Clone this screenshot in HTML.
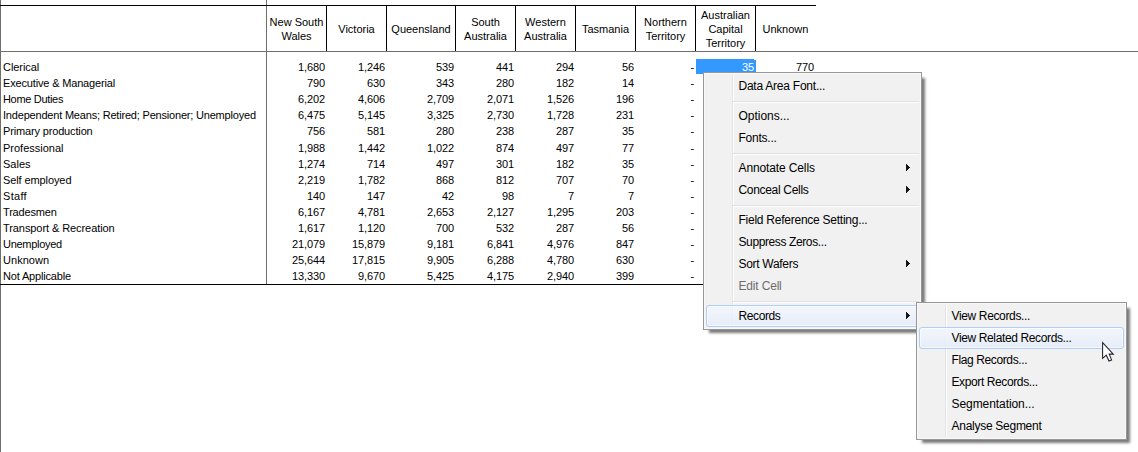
<!DOCTYPE html>
<html><head><meta charset="utf-8"><title>Table</title>
<style>
html,body{margin:0;padding:0;background:#fff;}
body{width:1138px;height:452px;position:relative;overflow:hidden;font-family:"Liberation Sans",Arial,sans-serif;font-size:11px;color:#000;}
.a{position:absolute;}
.ln{position:absolute;background:#000;}
.g{background:#6e6e6e;}
.t{position:absolute;white-space:nowrap;line-height:14px;height:14px;}
.n{text-align:right;letter-spacing:-0.1px;}
.h{position:absolute;text-align:center;line-height:14px;white-space:nowrap;}
.menu{position:absolute;background:#f1f1f1;border:1px solid #979797;box-sizing:border-box;box-shadow:4.5px 4.5px 2.5px -1.5px rgba(0,0,0,.52);font-size:12px;}
.menu:before{content:"";position:absolute;left:0;top:0;right:0;bottom:0;border:1px solid #f8f8f8;}
.gut{position:absolute;left:28px;top:2px;bottom:2px;width:1px;background:#e2e3e3;border-right:1px solid #fff;}
.mi{position:absolute;left:34.5px;white-space:nowrap;line-height:22px;height:22px;color:#000;}
.sep{position:absolute;left:29px;right:2px;height:1px;background:#e0e0e0;border-bottom:1px solid #fff;}
.hov{position:absolute;left:2px;right:2px;height:22px;box-sizing:border-box;border:1px solid #aecff7;border-radius:3px;background:linear-gradient(rgba(244,247,254,.8),rgba(227,236,250,.8));box-shadow:inset 0 0 0 1px rgba(255,255,255,.6);}
.arr{position:absolute;width:0;height:0;border-left:4px solid #000;border-top:3.5px solid transparent;border-bottom:3.5px solid transparent;}
</style></head><body>

<div class="ln g" style="left:0;top:0;width:1px;height:452px"></div>
<div class="ln g" style="left:266px;top:0;width:1px;height:285px"></div>
<div class="ln" style="left:0;top:5px;width:816px;height:1px"></div>
<div class="ln g" style="left:0;top:51px;width:1138px;height:1px"></div>
<div class="ln" style="left:0;top:284px;width:816px;height:1px"></div>
<div class="ln" style="left:326px;top:6px;width:1px;height:45px"></div>
<div class="ln" style="left:386px;top:6px;width:1px;height:45px"></div>
<div class="ln" style="left:455px;top:6px;width:1px;height:45px"></div>
<div class="ln" style="left:515px;top:6px;width:1px;height:45px"></div>
<div class="ln" style="left:575px;top:6px;width:1px;height:45px"></div>
<div class="ln" style="left:635px;top:6px;width:1px;height:45px"></div>
<div class="ln" style="left:695px;top:6px;width:1px;height:45px"></div>
<div class="ln" style="left:755px;top:6px;width:1px;height:45px"></div>
<div class="h" style="left:267px;width:59px;top:15.0px"><span id="h0_0" style="">New South</span><br><span id="h0_1" style="">Wales</span></div>
<div class="h" style="left:327px;width:59px;top:22.0px"><span id="h1_0" style="">Victoria</span></div>
<div class="h" style="left:387px;width:68px;top:22.0px"><span id="h2_0" style="">Queensland</span></div>
<div class="h" style="left:456px;width:59px;top:15.0px"><span id="h3_0" style="">South</span><br><span id="h3_1" style="">Australia</span></div>
<div class="h" style="left:516px;width:59px;top:15.0px"><span id="h4_0" style="">Western</span><br><span id="h4_1" style="">Australia</span></div>
<div class="h" style="left:576px;width:59px;top:22.0px"><span id="h5_0" style="">Tasmania</span></div>
<div class="h" style="left:636px;width:59px;top:15.0px"><span id="h6_0" style="">Northern</span><br><span id="h6_1" style="">Territory</span></div>
<div class="h" style="left:696px;width:59px;top:8.0px"><span id="h7_0" style="">Australian</span><br><span id="h7_1" style="">Capital</span><br><span id="h7_2" style="">Territory</span></div>
<div class="h" style="left:756px;width:59px;top:22.0px"><span id="h8_0" style="">Unknown</span></div>
<div class="a" style="left:696px;top:59px;width:60px;height:15px;background:#3399ff"></div>
<div class="a" style="left:754px;top:59px;width:2px;height:1px;background:#fff"></div>
<div class="t" id="r0" style="left:3px;top:60px;letter-spacing:-0.057px;">Clerical</div>
<div class="t n" style="right:813px;top:60px;">1,680</div>
<div class="t n" style="right:753px;top:60px;">1,246</div>
<div class="t n" style="right:684px;top:60px;">539</div>
<div class="t n" style="right:624px;top:60px;">441</div>
<div class="t n" style="right:564px;top:60px;">294</div>
<div class="t n" style="right:504px;top:60px;">56</div>
<div class="t n" style="right:444px;top:60px;">-</div>
<div class="t n" style="right:384px;top:60px;color:#fff;">35</div>
<div class="t n" style="right:324px;top:60px;">770</div>
<div class="t" id="r1" style="left:3px;top:76px;letter-spacing:-0.162px;">Executive &amp; Managerial</div>
<div class="t n" style="right:813px;top:76px;">790</div>
<div class="t n" style="right:753px;top:76px;">630</div>
<div class="t n" style="right:684px;top:76px;">343</div>
<div class="t n" style="right:624px;top:76px;">280</div>
<div class="t n" style="right:564px;top:76px;">182</div>
<div class="t n" style="right:504px;top:76px;">14</div>
<div class="t n" style="right:444px;top:76px;">-</div>
<div class="t" id="r2" style="left:3px;top:92px;letter-spacing:-0.320px;">Home Duties</div>
<div class="t n" style="right:813px;top:92px;">6,202</div>
<div class="t n" style="right:753px;top:92px;">4,606</div>
<div class="t n" style="right:684px;top:92px;">2,709</div>
<div class="t n" style="right:624px;top:92px;">2,071</div>
<div class="t n" style="right:564px;top:92px;">1,526</div>
<div class="t n" style="right:504px;top:92px;">196</div>
<div class="t n" style="right:444px;top:92px;">-</div>
<div class="t" id="r3" style="left:3px;top:108px;letter-spacing:-0.194px;">Independent Means; Retired; Pensioner; Unemployed</div>
<div class="t n" style="right:813px;top:108px;">6,475</div>
<div class="t n" style="right:753px;top:108px;">5,145</div>
<div class="t n" style="right:684px;top:108px;">3,325</div>
<div class="t n" style="right:624px;top:108px;">2,730</div>
<div class="t n" style="right:564px;top:108px;">1,728</div>
<div class="t n" style="right:504px;top:108px;">231</div>
<div class="t n" style="right:444px;top:108px;">-</div>
<div class="t" id="r4" style="left:3px;top:124px;letter-spacing:-0.153px;">Primary production</div>
<div class="t n" style="right:813px;top:124px;">756</div>
<div class="t n" style="right:753px;top:124px;">581</div>
<div class="t n" style="right:684px;top:124px;">280</div>
<div class="t n" style="right:624px;top:124px;">238</div>
<div class="t n" style="right:564px;top:124px;">287</div>
<div class="t n" style="right:504px;top:124px;">35</div>
<div class="t n" style="right:444px;top:124px;">-</div>
<div class="t" id="r5" style="left:3px;top:141px;letter-spacing:0.000px;">Professional</div>
<div class="t n" style="right:813px;top:141px;">1,988</div>
<div class="t n" style="right:753px;top:141px;">1,442</div>
<div class="t n" style="right:684px;top:141px;">1,022</div>
<div class="t n" style="right:624px;top:141px;">874</div>
<div class="t n" style="right:564px;top:141px;">497</div>
<div class="t n" style="right:504px;top:141px;">77</div>
<div class="t n" style="right:444px;top:141px;">-</div>
<div class="t" id="r6" style="left:3px;top:157px;letter-spacing:0.000px;">Sales</div>
<div class="t n" style="right:813px;top:157px;">1,274</div>
<div class="t n" style="right:753px;top:157px;">714</div>
<div class="t n" style="right:684px;top:157px;">497</div>
<div class="t n" style="right:624px;top:157px;">301</div>
<div class="t n" style="right:564px;top:157px;">182</div>
<div class="t n" style="right:504px;top:157px;">35</div>
<div class="t n" style="right:444px;top:157px;">-</div>
<div class="t" id="r7" style="left:3px;top:173px;letter-spacing:-0.100px;">Self employed</div>
<div class="t n" style="right:813px;top:173px;">2,219</div>
<div class="t n" style="right:753px;top:173px;">1,782</div>
<div class="t n" style="right:684px;top:173px;">868</div>
<div class="t n" style="right:624px;top:173px;">812</div>
<div class="t n" style="right:564px;top:173px;">707</div>
<div class="t n" style="right:504px;top:173px;">70</div>
<div class="t n" style="right:444px;top:173px;">-</div>
<div class="t" id="r8" style="left:3px;top:189px;letter-spacing:0.300px;">Staff</div>
<div class="t n" style="right:813px;top:189px;">140</div>
<div class="t n" style="right:753px;top:189px;">147</div>
<div class="t n" style="right:684px;top:189px;">42</div>
<div class="t n" style="right:624px;top:189px;">98</div>
<div class="t n" style="right:564px;top:189px;">7</div>
<div class="t n" style="right:504px;top:189px;">7</div>
<div class="t n" style="right:444px;top:189px;">-</div>
<div class="t" id="r9" style="left:3px;top:205px;letter-spacing:-0.175px;">Tradesmen</div>
<div class="t n" style="right:813px;top:205px;">6,167</div>
<div class="t n" style="right:753px;top:205px;">4,781</div>
<div class="t n" style="right:684px;top:205px;">2,653</div>
<div class="t n" style="right:624px;top:205px;">2,127</div>
<div class="t n" style="right:564px;top:205px;">1,295</div>
<div class="t n" style="right:504px;top:205px;">203</div>
<div class="t n" style="right:444px;top:205px;">-</div>
<div class="t" id="r10" style="left:3px;top:221px;letter-spacing:-0.076px;">Transport &amp; Recreation</div>
<div class="t n" style="right:813px;top:221px;">1,617</div>
<div class="t n" style="right:753px;top:221px;">1,120</div>
<div class="t n" style="right:684px;top:221px;">700</div>
<div class="t n" style="right:624px;top:221px;">532</div>
<div class="t n" style="right:564px;top:221px;">287</div>
<div class="t n" style="right:504px;top:221px;">56</div>
<div class="t n" style="right:444px;top:221px;">-</div>
<div class="t" id="r11" style="left:3px;top:237px;letter-spacing:-0.289px;">Unemployed</div>
<div class="t n" style="right:813px;top:237px;">21,079</div>
<div class="t n" style="right:753px;top:237px;">15,879</div>
<div class="t n" style="right:684px;top:237px;">9,181</div>
<div class="t n" style="right:624px;top:237px;">6,841</div>
<div class="t n" style="right:564px;top:237px;">4,976</div>
<div class="t n" style="right:504px;top:237px;">847</div>
<div class="t n" style="right:444px;top:237px;">-</div>
<div class="t" id="r12" style="left:3px;top:253px;letter-spacing:0.033px;">Unknown</div>
<div class="t n" style="right:813px;top:253px;">25,644</div>
<div class="t n" style="right:753px;top:253px;">17,815</div>
<div class="t n" style="right:684px;top:253px;">9,905</div>
<div class="t n" style="right:624px;top:253px;">6,288</div>
<div class="t n" style="right:564px;top:253px;">4,780</div>
<div class="t n" style="right:504px;top:253px;">630</div>
<div class="t n" style="right:444px;top:253px;">-</div>
<div class="t" id="r13" style="left:3px;top:269px;letter-spacing:-0.169px;">Not Applicable</div>
<div class="t n" style="right:813px;top:269px;">13,330</div>
<div class="t n" style="right:753px;top:269px;">9,670</div>
<div class="t n" style="right:684px;top:269px;">5,425</div>
<div class="t n" style="right:624px;top:269px;">4,175</div>
<div class="t n" style="right:564px;top:269px;">2,940</div>
<div class="t n" style="right:504px;top:269px;">399</div>
<div class="t n" style="right:444px;top:269px;">-</div>
<div class="menu" style="left:703px;top:72px;width:219px;height:258px"><div class="gut"></div><div class="mi" id="m0" style="top:1.5px;letter-spacing:-0.238px;">Data Area Font...</div><div class="sep" style="top:28px"></div><div class="mi" id="m2" style="top:31.5px;letter-spacing:-0.022px;">Options...</div><div class="mi" id="m3" style="top:53.5px;letter-spacing:-0.229px;">Fonts...</div><div class="sep" style="top:80px"></div><div class="mi" id="m5" style="top:83.5px;letter-spacing:-0.123px;">Annotate Cells</div><svg class="a" style="left:202px;top:91px" width="4" height="7" viewBox="0 0 4 7" shape-rendering="crispEdges"><path d="M0 0h1v7h-1z M1 1h1v5h-1z M2 2h1v3h-1z M3 3h1v1h-1z" fill="#151515"/></svg><div class="mi" id="m6" style="top:105.5px;letter-spacing:-0.317px;">Conceal Cells</div><svg class="a" style="left:202px;top:113px" width="4" height="7" viewBox="0 0 4 7" shape-rendering="crispEdges"><path d="M0 0h1v7h-1z M1 1h1v5h-1z M2 2h1v3h-1z M3 3h1v1h-1z" fill="#151515"/></svg><div class="sep" style="top:132px"></div><div class="mi" id="m8" style="top:135.5px;letter-spacing:-0.248px;">Field Reference Setting...</div><div class="mi" id="m9" style="top:157.5px;letter-spacing:-0.388px;">Suppress Zeros...</div><div class="mi" id="m10" style="top:179.5px;letter-spacing:-0.300px;">Sort Wafers</div><svg class="a" style="left:202px;top:187px" width="4" height="7" viewBox="0 0 4 7" shape-rendering="crispEdges"><path d="M0 0h1v7h-1z M1 1h1v5h-1z M2 2h1v3h-1z M3 3h1v1h-1z" fill="#151515"/></svg><div class="mi" id="m11" style="top:201.5px;color:#6d6d6d;letter-spacing:-0.175px;">Edit Cell</div><div class="sep" style="top:228px"></div><div class="hov" style="top:232px"></div><div class="mi" id="m13" style="top:231.5px;letter-spacing:-0.400px;">Records</div><svg class="a" style="left:202px;top:239px" width="4" height="7" viewBox="0 0 4 7" shape-rendering="crispEdges"><path d="M0 0h1v7h-1z M1 1h1v5h-1z M2 2h1v3h-1z M3 3h1v1h-1z" fill="#151515"/></svg></div>
<div class="menu" style="left:916px;top:302px;width:211px;height:138px"><div class="gut"></div><div class="mi" id="s0" style="top:1.5px;letter-spacing:-0.357px;">View Records...</div><div class="hov" style="top:24px"></div><div class="mi" id="s1" style="top:23.5px;letter-spacing:-0.372px;">View Related Records...</div><div class="mi" id="s2" style="top:45.5px;letter-spacing:-0.384px;">Flag Records...</div><div class="mi" id="s3" style="top:67.5px;letter-spacing:-0.388px;">Export Records...</div><div class="mi" id="s4" style="top:89.5px;letter-spacing:-0.071px;">Segmentation...</div><div class="mi" id="s5" style="top:111.5px;letter-spacing:-0.271px;">Analyse Segment</div></div>
<svg class="a" style="left:1094px;top:334px" width="30" height="34" viewBox="1094 334 30 34"><path d="M1102.6 342.6 L1102.6 358.4 L1106.3 355.2 L1109 361 L1111.6 359.9 L1109.2 354.1 L1113.3 354.1 Z" fill="#fff" stroke="#20202c" stroke-width="1.05" stroke-linejoin="miter"/></svg>
</body></html>
